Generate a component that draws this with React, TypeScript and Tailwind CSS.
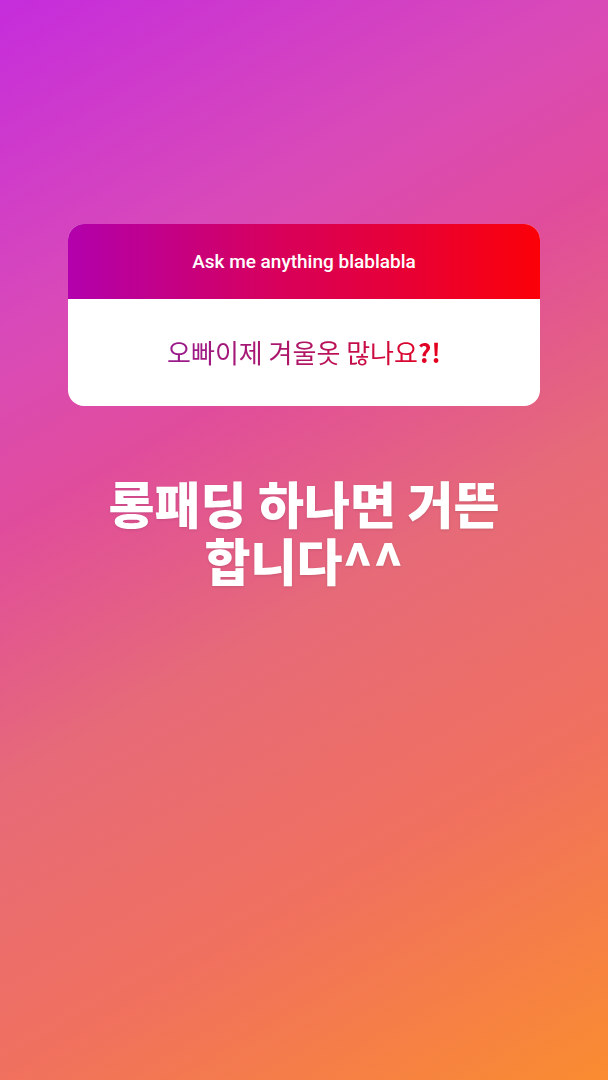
export default function App() {
  return (
    <div
      className="w-[608px] h-[1080px] flex flex-col items-center bg-[linear-gradient(150deg,#c52cdc_0%,#d94ab8_24%,#e04c9c_37%,#e66a78_55%,#f0705f_75%,#fa8c30_100%)]"
      style={{ fontFamily: 'Roboto, "Noto Sans CJK KR", sans-serif' }}
    >
      <div className="mt-[224px] w-[472px] rounded-[16px] overflow-hidden bg-white">
        <div className="h-[75px] flex items-center justify-center pt-[2px] bg-[linear-gradient(90deg,#b200ad_0%,#d8005a_45%,#ea0030_75%,#fb0008_100%)]">
          <span className="text-white text-[19px] font-medium" style={{ fontFamily: 'Roboto, sans-serif' }}>
            Ask me anything blablabla
          </span>
        </div>
        <div className="h-[107px] flex items-center justify-center pb-[2px]">
          <span
            className="text-[26px] bg-[linear-gradient(90deg,#981a8c_0%,#b01565_50%,#e6001c_100%)] bg-clip-text text-transparent"
            style={{ fontFamily: '"Noto Sans CJK KR", sans-serif' }}
          >
            오빠이제 겨울옷 많나요<span className="font-bold">?!</span>
          </span>
        </div>
      </div>
      <div
        className="mt-[68px] text-white text-[50px] font-black leading-[57px] text-center w-[460px] [text-shadow:0_1px_3px_rgba(0,0,0,0.12)]"
        style={{ fontFamily: '"Noto Sans CJK KR", sans-serif' }}
      >
        롱패딩 하나면 거뜬
        <br />
        합니다^^
      </div>
    </div>
  );
}
